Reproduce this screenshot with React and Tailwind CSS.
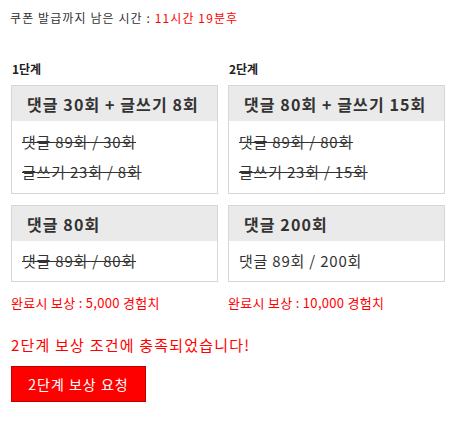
import React from "react";

const stages = [
  {
    label: "1단계",
    width: "w-[207px]",
    cards: [
      {
        title: "댓글 30회 + 글쓰기 8회",
        rows: [
          { text: "댓글 89회 / 30회", done: true },
          { text: "글쓰기 23회 / 8회", done: true },
        ],
      },
      {
        title: "댓글 80회",
        rows: [{ text: "댓글 89회 / 80회", done: true }],
      },
    ],
    reward: "완료시 보상 : 5,000 경험치",
  },
  {
    label: "2단계",
    width: "w-[217px]",
    cards: [
      {
        title: "댓글 80회 + 글쓰기 15회",
        rows: [
          { text: "댓글 89회 / 80회", done: true },
          { text: "글쓰기 23회 / 15회", done: true },
        ],
      },
      {
        title: "댓글 200회",
        rows: [{ text: "댓글 89회 / 200회", done: false }],
      },
    ],
    reward: "완료시 보상 : 10,000 경험치",
  },
];

const MissionCard = ({ card, className }) => (
  <div className={`border border-[#d6d6d6] bg-white ${className}`}>
    <div className="h-[35px] bg-[#eaeaea] pl-[15px] flex items-center text-[16px] font-bold tracking-[1.1px] text-[#333]">
      {card.title}
    </div>
    <div className={card.rows.length > 1 ? "py-[6px]" : "py-[5px]"}>
      {card.rows.map((row, i) => (
        <div
          key={i}
          className={`h-[30px] leading-[30px] pl-[10px] text-[15px] tracking-[0.8px] text-[#333] ${
            row.done ? "line-through" : ""
          }`}
        >
          {row.text}
        </div>
      ))}
    </div>
  </div>
);

export default function App() {
  return (
    <div
      className="min-h-screen bg-white pl-[10px] pt-[10px] text-[#333]"
      style={{ fontFamily: '"Noto Sans CJK KR", "Noto Sans", sans-serif' }}
    >
      {/* Timer */}
      <p className="h-[16px] leading-[16px] text-[12px] tracking-[1.1px]">
        쿠폰 발급까지 남은 시간 : <span className="text-[#ff0000]">11시간 19분후</span>
      </p>

      {/* Stages */}
      <div className="mt-[35px] ml-[1px] flex gap-x-[10px]">
        {stages.map((stage) => (
          <div key={stage.label} className={`flex flex-col ${stage.width}`}>
            <h4 className="h-[16px] leading-[16px] text-[12px] font-bold text-[#222] pl-[1px]">
              {stage.label}
            </h4>
            <MissionCard card={stage.cards[0]} className="mt-[8px]" />
            <MissionCard card={stage.cards[1]} className="mt-[11px]" />
            <p className="mt-[13px] h-[16px] leading-[16px] text-[13px] tracking-[0.3px] text-[#ff0000]">
              {stage.reward}
            </p>
          </div>
        ))}
      </div>

      {/* Result */}
      <p className="mt-[24px] ml-[1px] h-[20px] leading-[20px] text-[15px] tracking-[1.2px] text-[#ff0000]">
        2단계 보상 조건에 충족되었습니다!
      </p>
      <button className="mt-[11px] ml-[1px] w-[135px] h-[36px] bg-[#ff0000] border border-[#c00000] text-white text-[14px] tracking-[1px] flex items-center justify-center">
        2단계 보상 요청
      </button>
    </div>
  );
}
